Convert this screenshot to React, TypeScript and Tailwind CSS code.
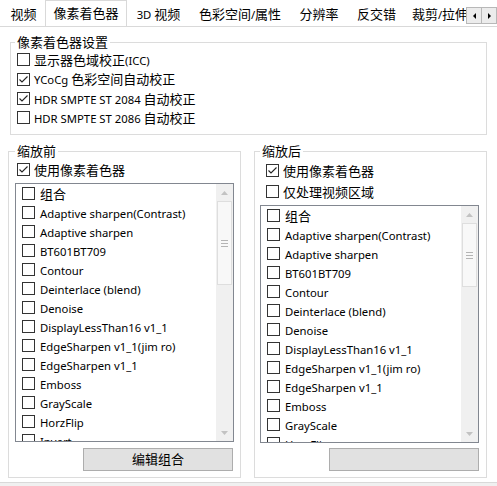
import React from "react";

const CJK = /([\u2E80-\u9FFF\uFF00-\uFFEF]+)/;

function Txt({ s }: { s: string }) {
  return (
    <>
      {s.split(CJK).map((p, i) =>
        p ? (
          <span key={i} className={CJK.test(p) ? "text-[13px]" : "text-[11.3px]"}>
            {p}
          </span>
        ) : null
      )}
    </>
  );
}

function Box({ checked }: { checked?: boolean }) {
  return (
    <span className="flex h-[13px] w-[13px] shrink-0 items-center justify-center border border-[#333333] bg-white">
      {checked && (
        <svg width="11" height="11" viewBox="0 0 11 11">
          <path d="M1.5 5.5 L4 8 L9.5 2.5" fill="none" stroke="#222" strokeWidth="1.1" />
        </svg>
      )}
    </span>
  );
}

function Check({ label, checked, h = "h-[19px]" }: { label: string; checked?: boolean; h?: string }) {
  return (
    <div className={`flex items-center gap-[4px] ${h}`}>
      <Box checked={checked} />
      <span className="whitespace-nowrap">
        <Txt s={label} />
      </span>
    </div>
  );
}

const SHADERS = [
  "组合",
  "Adaptive sharpen(Contrast)",
  "Adaptive sharpen",
  "BT601BT709",
  "Contour",
  "Deinterlace (blend)",
  "Denoise",
  "DisplayLessThan16 v1_1",
  "EdgeSharpen v1_1(jim ro)",
  "EdgeSharpen v1_1",
  "Emboss",
  "GrayScale",
  "HorzFlip",
  "Invert",
];

function ScrollBar({ thumbH }: { thumbH: string }) {
  return (
    <div className="flex w-[17px] shrink-0 flex-col bg-[#f0f0f0]">
      <div className="flex h-[17px] items-center justify-center">
        <svg width="7" height="4" viewBox="0 0 7 4">
          <path d="M0 4 L3.5 0 L7 4 Z" fill="#c2c2c2" />
        </svg>
      </div>
      <div className="flex flex-1 flex-col">
        <div
          className={`mx-[1px] flex items-center justify-center border border-[#dedede] bg-[#f8f8f8] ${thumbH}`}
        >
          <div className="flex flex-col gap-[2px]">
            <div className="h-px w-[7px] bg-[#b4b4b4]" />
            <div className="h-px w-[7px] bg-[#b4b4b4]" />
            <div className="h-px w-[7px] bg-[#b4b4b4]" />
          </div>
        </div>
      </div>
      <div className="flex h-[17px] items-center justify-center">
        <svg width="7" height="4" viewBox="0 0 7 4">
          <path d="M0 0 L3.5 4 L7 0 Z" fill="#c2c2c2" />
        </svg>
      </div>
    </div>
  );
}

function ShaderList({ thumbH, h }: { thumbH: string; h: string }) {
  return (
    <div className={`flex w-[219px] border border-[#828790] bg-white ${h}`}>
      <div className="flex-1 overflow-hidden">
        {SHADERS.map((s) => (
          <div key={s} className="flex h-[19px] items-center gap-[5px] pl-[6px]">
            <Box />
            <span className="whitespace-nowrap">
              <Txt s={s} />
            </span>
          </div>
        ))}
      </div>
      <ScrollBar thumbH={thumbH} />
    </div>
  );
}

function Button({ label }: { label?: string }) {
  return (
    <div className="flex h-[23px] w-[150px] items-center justify-center border border-[#adadad] bg-[#e1e1e1]">
      {label && <Txt s={label} />}
    </div>
  );
}

const TABS = ["视频", "像素着色器", "3D 视频", "色彩空间/属性", "分辨率", "反交错", "裁剪/拉伸"];
const TAB_W = ["w-[43px]", "w-[82px]", "w-[63px]", "w-[100px]", "w-[58px]", "w-[57px]", "w-[70px]"];

export default function App() {
  return (
    <div
      className="flex h-[486px] w-[497px] flex-col overflow-hidden bg-white leading-[17px] text-black"
      style={{ fontFamily: '"Noto Sans", "Noto Sans CJK SC", sans-serif' }}
    >
      {/* tab strip */}
      <div className="flex h-[27px] shrink-0 border-b border-[#d9d9d9]">
        <div className="flex w-[466px] items-end overflow-hidden pl-[2px]">
          {TABS.map((t, i) =>
            i === 1 ? (
              <div
                key={t}
                className={`-mb-px flex h-[27px] shrink-0 items-center justify-center border border-b-0 border-[#d9d9d9] bg-white pb-[1px] ${TAB_W[i]}`}
              >
                <Txt s={t} />
              </div>
            ) : (
              <div key={t} className={`flex h-[23px] shrink-0 items-center justify-center pb-[2px] ${TAB_W[i]}`}>
                <span className="whitespace-nowrap">
                  <Txt s={t} />
                </span>
              </div>
            )
          )}
        </div>
        <div className="mt-[7px] flex h-[17px]">
          <div className="flex w-[16px] items-center justify-center border border-[#b8b8b8] bg-[#ececec]">
            <svg width="3" height="6" viewBox="0 0 3 6">
              <path d="M3 0 L0 3 L3 6 Z" fill="#000" />
            </svg>
          </div>
          <div className="flex w-[15px] items-center justify-center border border-l-0 border-[#b8b8b8] bg-[#ececec]">
            <svg width="3" height="6" viewBox="0 0 3 6">
              <path d="M0 0 L3 3 L0 6 Z" fill="#000" />
            </svg>
          </div>
        </div>
      </div>

      {/* tab page */}
      <div className="flex flex-1 flex-col">
        <fieldset className="ml-[10px] mt-[6px] w-[477px] border border-[#dcdcdc] pb-[7px] pl-[6px]">
          <legend className="-ml-[2px] px-[2px]">
            <Txt s="像素着色器设置" />
          </legend>
          <div className="-mt-[1px] flex flex-col">
            <Check label="显示器色域校正(ICC)" />
            <Check label="YCoCg 色彩空间自动校正" checked h="h-[20px]" />
            <Check label="HDR SMPTE ST 2084 自动校正" checked />
            <Check label="HDR SMPTE ST 2086 自动校正" />
          </div>
        </fieldset>

        <div className="mt-[7px] flex gap-[13px] pl-[8px]">
          <fieldset className="h-[336px] w-[233px] border border-[#dcdcdc] pl-[6px]">
            <legend className="px-[2px]">
              <Txt s="缩放前" />
            </legend>
            <div className="pl-[2px]">
              <Check label="使用像素着色器" checked />
            </div>
            <div className="mt-[4px]">
              <ShaderList thumbH="h-[84px]" h="h-[259px]" />
            </div>
            <div className="mt-[6px] flex justify-end pr-[7px]">
              <Button label="编辑组合" />
            </div>
          </fieldset>

          <fieldset className="h-[336px] w-[233px] border border-[#dcdcdc] pl-[5px]">
            <legend className="px-[2px]">
              <Txt s="缩放后" />
            </legend>
            <div className="flex flex-col pl-[6px]">
              <Check label="使用像素着色器" checked h="h-[21px]" />
              <Check label="仅处理视频区域" h="h-[21px]" />
            </div>
            <div className="mt-[3px]">
              <ShaderList thumbH="h-[64px]" h="h-[238px]" />
            </div>
            <div className="mt-[5px] flex justify-end pr-[7px]">
              <Button />
            </div>
          </fieldset>
        </div>
      </div>

      <div className="h-[4px] shrink-0 border-t border-[#d9d9d9] bg-[#f0f0f0]" />
    </div>
  );
}
